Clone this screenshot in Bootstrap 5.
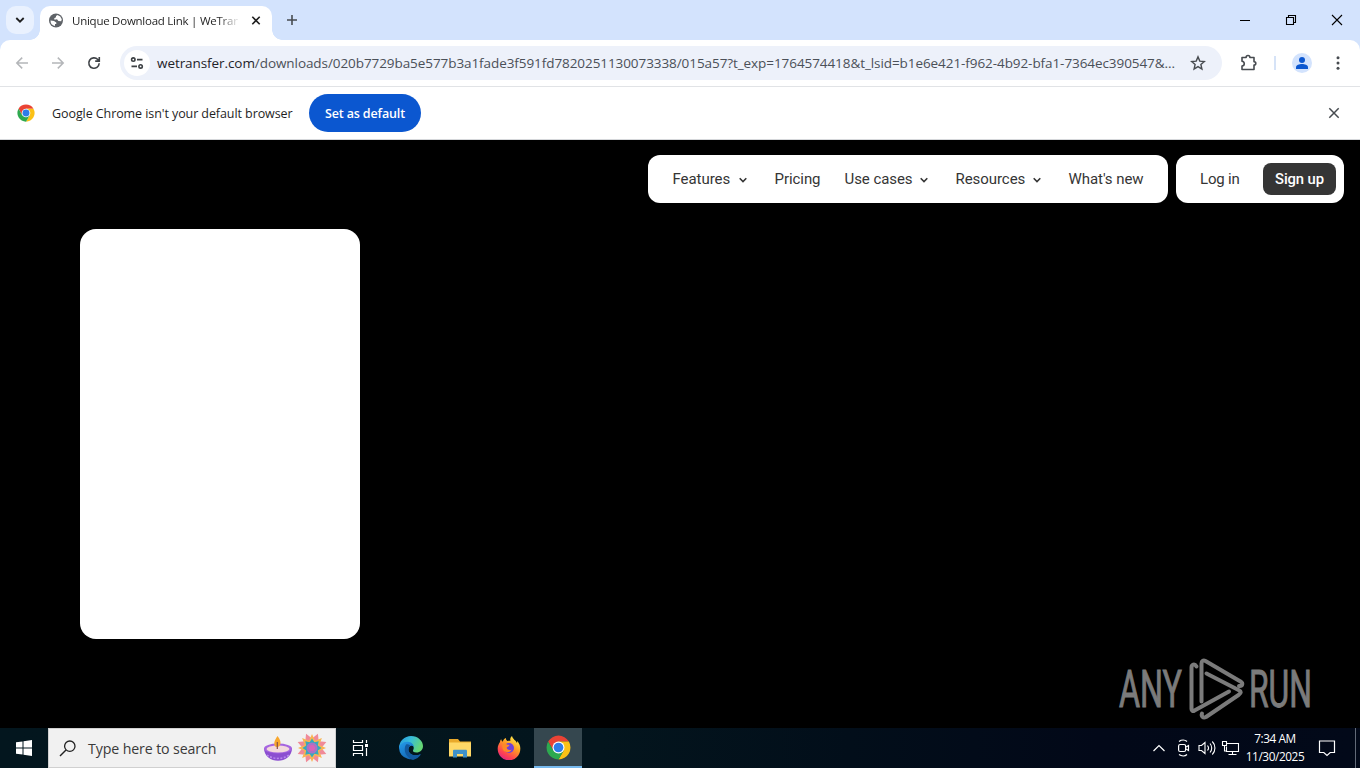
<!DOCTYPE html>
<html lang="en">
<head>
  <meta charset="UTF-8">
  <meta name="viewport" content="width=device-width, initial-scale=1.0">
  <title>Unique Download Link | WeTransfer</title>
  <link rel="stylesheet" href="https://cdn.jsdelivr.net/npm/bootstrap@5.3.0/dist/css/bootstrap.min.css">
  <style>
    body { width: 1360px; height: 768px; overflow: hidden; background: #000; font-family: "Open Sans", "Noto Sans", sans-serif; color: #1f1f1f; }
    svg { display: block; flex: none; }
    span { white-space: nowrap; }

    /* Browser window */
    .tab-strip { height: 40px; background: #d3e3fd; }
    .tab-search { width: 28px; height: 28px; margin: 6px 6px 0; border-radius: 10px; background: #e9f1fe; }
    .tab-active { width: 232px; height: 34px; margin-top: 6px; border-radius: 10px 10px 0 0; background: #fff; padding: 0 10px 5px 8px; }
    .tab-active::before, .tab-active::after { content: ""; position: absolute; bottom: 0; width: 10px; height: 10px; }
    .tab-active::before { left: -10px; background: radial-gradient(circle at 0 0, transparent 9.5px, #fff 10px); }
    .tab-active::after { right: -10px; background: radial-gradient(circle at 100% 0, transparent 9.5px, #fff 10px); }
    .tab-title { width: 166px; margin-left: 8px; font-size: 11.5px; letter-spacing: -.25px; overflow: hidden; -webkit-mask-image: linear-gradient(90deg, #000 146px, transparent 168px); }
    .new-tab { margin: 14px 0 0 14px; }
    .win-buttons { height: 40px; gap: 34px; padding-right: 17px; }
    .toolbar-wrap { height: 46px; background: #d3e3fd; }
    .toolbar { height: 46px; background: #fff; border-radius: 10px 10px 0 0; }
    .nav-icons { width: 120px; padding-left: 14px; gap: 20px; }
    .address { width: 1102px; height: 34px; border-radius: 17px; background: #edf1fa; padding: 0 16px 0 4px; }
    .site-info { width: 26px; height: 26px; border-radius: 50%; background: #fff; }
    .url { width: 1024px; margin-left: 7px; font-size: 13.5px; letter-spacing: -.073px; color: #4b5058; }
    .url b { font-weight: 400; color: #1f2329; }
    .infobar { height: 54px; background: #fff; border-top: 1px solid #e1e3e6; border-bottom: 1px solid #d5d7da; padding: 0 18px 1px 17px; }
    .infobar-text { width: 241px; margin: 0 16px 0 17px; padding-top: 3px; font-size: 12.5px; letter-spacing: -.08px; }
    .btn-default-browser { width: 112px; height: 38px; border-radius: 19px; background: #0b57d0; color: #fff; font-size: 12.5px; font-weight: 600; letter-spacing: -.15px; padding: 3px 0 0; border: 0; }
    .btn-default-browser:hover { background: #0b57d0; color: #fff; }

    /* Page */
    .page-view { height: 588px; background: #000; padding: 15px 16px 0 0; }
    .site-nav { font-family: Roboto, sans-serif; font-size: 15px; color: #353535; gap: 8px; }
    .pill { height: 48px; border-radius: 12px; background: #fff; }
    .pill-main { width: 520px; padding-left: 24.5px; }
    .pill-main span { letter-spacing: -.06px; }
    .pill-user { width: 168px; padding: 0 8px 0 24px; }
    .pill-user span { letter-spacing: -.2px; }
    .entry-features { width: 102px; }
    .entry-pricing { width: 70px; }
    .entry-cases { width: 111px; }
    .entry-resources { width: 113px; }
    .entry-features svg, .entry-cases svg, .entry-resources svg { margin: 2px 28px 0 0; }
    .btn-signup { width: 73px; height: 32px; border-radius: 8px; background: #353535; color: #fff; font-weight: 500; font-size: 14.8px; letter-spacing: -.1px; padding: 0; border: 0; }
    .transfer-panel { width: 280px; height: 410px; margin: 26px 0 0 80px; border-radius: 16px; background: #fff; }
    .watermark { position: absolute; right: 40px; bottom: 6px; }

    /* Taskbar */
    .taskbar { height: 40px; background: linear-gradient(90deg, #03161e 0, #03151d 600px, #020e1a 850px, #020818 1100px, #020919 100%); color: #fff; }
    .start { width: 48px; height: 40px; }
    .search-box { width: 288px; height: 40px; background: #f1f1f1; border: 1px solid #d0d0d0; padding: 0 8px 0 10px; color: #3a3a3a; }
    .search-text { width: 131px; margin-left: 12px; padding-top: 1px; font-size: 14.2px; letter-spacing: -.12px; }
    .task { width: 49px; height: 40px; }
    .task-view { width: 50px; padding-right: 1px; }
    .task-open { width: 48px; margin-left: 1px; background: #35474f; border-bottom: 2px solid #76b9ed; padding-top: 1px; }
    .clock { width: 62px; font-size: 11.8px; line-height: 18px; letter-spacing: -.4px; margin: 0 12px 2px 4px; }
    .desktop-edge { width: 5px; height: 40px; border-left: 1px solid #626a78; margin-left: 19px; }
  </style>
</head>

<body>
  <svg width="0" height="0" class="position-absolute">
    <defs>
      <symbol id="chrome" viewBox="0 0 48 48">
        <path d="M4.100 12.500A23 23 0 0 1 43.900 12.500H24L14 29.800Z" fill="#ea4335"/>
        <path d="M43.900 12.500A23 23 0 0 1 24 47l10-17.200L24 12.500Z" fill="#fbc116"/>
        <path d="M4.100 12.500A23 23 0 0 0 24 47l10-17.200H14Z" fill="#2da94f"/>
        <circle cx="24" cy="24" r="11.500" fill="#fff"/>
        <circle cx="24" cy="24" r="9.300" fill="#2f7de9"/>
      </symbol>
      <symbol id="chevron" viewBox="0 0 8 6">
        <path d="m.7 1.200 3.300 3.300 3.300-3.300" fill="none" stroke="#353535" stroke-width="1.600"/>
      </symbol>
    </defs>
  </svg>

  <!-- Tab strip -->
  <div class="tab-strip d-flex">
    <div class="tab-search d-flex align-items-center justify-content-center">
      <svg width="10" height="8" viewBox="0 0 10 8"><path d="m1.300 2 3.700 3.700L8.700 2" fill="none" stroke="#1f1f1f" stroke-width="1.800"/></svg>
    </div>
    <div class="tab-active position-relative d-flex align-items-center">
      <svg width="16" height="16" viewBox="0 0 16 16">
        <circle cx="8" cy="7.500" r="7" fill="#5f6368"/>
        <path d="M2.500 7.600 6 7.900l2.300 1.600v1.400H7v2.200a5.700 5.700 0 0 1-4.500-5.500ZM9.500 2 8 3v1.300l-1.800.9.300 1.500 2.500-.4L10.400 8l2.800.2.600-2A6 6 0 0 0 9.500 2Z" fill="#fff"/>
      </svg>
      <span class="tab-title">Unique Download Link | WeTransfer</span>
      <svg class="ms-auto" width="12" height="12" viewBox="0 0 12 12"><path d="m2.300 1.800 7.400 7.400M9.700 1.800 2.300 9.200" stroke="#1f1f1f" stroke-width="1.600"/></svg>
    </div>
    <svg class="new-tab" width="12" height="12" viewBox="0 0 12 12"><path d="M6 1v10M1 6h10" stroke="#474b50" stroke-width="1.600"/></svg>
    <div class="win-buttons d-flex align-items-center ms-auto">
      <svg width="12" height="12" viewBox="0 0 12 12"><path d="M1 6.500h10" stroke="#000"/></svg>
      <svg width="12" height="12" viewBox="0 0 12 12"><path d="M1.500 3.500h7v7h-7ZM3.500 3.500v-2h7v7h-2" fill="none" stroke="#000" stroke-width="1.100"/></svg>
      <svg width="12" height="12" viewBox="0 0 12 12"><path d="m1 1 10 10M11 1 1 11" stroke="#000" stroke-width="1.100"/></svg>
    </div>
  </div>

  <!-- Toolbar -->
  <div class="toolbar-wrap">
    <div class="toolbar d-flex align-items-center">
      <div class="nav-icons d-flex">
        <svg width="16" height="16" viewBox="0 0 16 16"><path d="M14 8H3M8.200 2.600 2.800 8l5.400 5.400" fill="none" stroke="#b4b6b9" stroke-width="1.500"/></svg>
        <svg width="16" height="16" viewBox="0 0 16 16"><path d="M2 8h11M7.800 2.600 13.200 8l-5.400 5.400" fill="none" stroke="#b4b6b9" stroke-width="1.500"/></svg>
        <svg width="16" height="16" viewBox="0 0 16 16"><path d="M13.200 8.300A5.200 5.200 0 1 1 11.800 4.500l1.200 1.400M13.300 2v4.100H9.200" fill="none" stroke="#3f4347" stroke-width="1.600"/></svg>
      </div>
      <div class="address d-flex align-items-center">
        <div class="site-info d-flex align-items-center justify-content-center">
          <svg width="14" height="14" viewBox="0 0 14 14"><g fill="none" stroke="#3c4043" stroke-width="1.600"><circle cx="3.300" cy="3.600" r="1.700"/><path d="M7 3.600h5.500M1.500 10.400H7"/><circle cx="10.600" cy="10.400" r="1.700"/></g></svg>
        </div>
        <span class="url"><b>wetransfer.com</b>/downloads/020b7729ba5e577b3a1fade3f591fd7820251130073338/015a57?t_exp=1764574418&amp;t_lsid=b1e6e421-f962-4b92-bfa1-7364ec390547&amp;...</span>
        <svg class="ms-auto" width="16" height="16" viewBox="0 0 16 16"><path d="m8 1.900 1.800 4.200 4.500.4-3.400 3 1 4.500L8 11.600 4.100 14l1-4.500-3.400-3 4.500-.4Z" fill="none" stroke="#474b50" stroke-width="1.400"/></svg>
      </div>
      <svg class="ms-3" width="20" height="20" viewBox="0 0 20 20"><path d="M4 4.500h4.100c0-2.700 3.800-2.700 3.800 0H16v4.300c2.400 0 2.400 3.200 0 3.200v4.500H4v-3.500c3-.3 3-4.400 0-4.700V4.500Z" fill="none" stroke="#474b50" stroke-width="1.600" stroke-linejoin="round"/></svg>
      <svg width="34" height="20" viewBox="0 0 34 20"><path d="M17 3v14" stroke="#c9daf5" stroke-width="1.500"/></svg>
      <svg width="20" height="20" viewBox="0 0 20 20"><circle cx="10" cy="10" r="10" fill="#d3e3fd"/><circle cx="10" cy="7" r="3" fill="#0b57d0"/><path d="M4 16v-1.800c0-2 3.300-3.200 6-3.200s6 1.200 6 3.200V16Z" fill="#0b57d0"/></svg>
      <svg class="ms-auto me-3" width="12" height="16" viewBox="0 0 12 16"><g fill="#474b50"><circle cx="6" cy="2.700" r="1.500"/><circle cx="6" cy="8" r="1.500"/><circle cx="6" cy="13.300" r="1.500"/></g></svg>
    </div>
  </div>

  <!-- Default browser bar -->
  <div class="infobar d-flex align-items-center">
    <svg width="18" height="18"><use href="#chrome"/></svg>
    <span class="infobar-text">Google Chrome isn't your default browser</span>
    <button type="button" class="btn btn-default-browser">Set as default</button>
    <svg class="ms-auto" width="16" height="16" viewBox="0 0 16 16"><path d="m3.300 3.300 9.400 9.400M12.700 3.300l-9.400 9.400" stroke="#474b50" stroke-width="1.500"/></svg>
  </div>

  <!-- Page -->
  <main class="page-view position-relative">
    <nav class="site-nav d-flex justify-content-end">
      <div class="pill pill-main d-flex align-items-center">
        <div class="entry-features d-flex align-items-center justify-content-between"><span>Features</span><svg width="8" height="6"><use href="#chevron"/></svg></div>
        <div class="entry-pricing"><span>Pricing</span></div>
        <div class="entry-cases d-flex align-items-center justify-content-between"><span>Use cases</span><svg width="8" height="6"><use href="#chevron"/></svg></div>
        <div class="entry-resources d-flex align-items-center justify-content-between"><span>Resources</span><svg width="8" height="6"><use href="#chevron"/></svg></div>
        <span>What's new</span>
      </div>
      <div class="pill pill-user d-flex align-items-center justify-content-between">
        <span>Log in</span>
        <button type="button" class="btn btn-signup">Sign up</button>
      </div>
    </nav>
    <div class="transfer-panel"></div>
    <svg class="watermark" width="204" height="68" viewBox="0 0 204 68">
      <g fill="#7b7b7b" stroke="#7b7b7b" stroke-width="1" font-family="Roboto, sans-serif" font-size="51">
        <text x="3" y="53" textLength="63" lengthAdjust="spacingAndGlyphs">ANY</text>
        <text x="133" y="53" textLength="63" lengthAdjust="spacingAndGlyphs">RUN</text>
      </g>
      <g fill="none" stroke="#7b7b7b" stroke-width="4" stroke-linecap="round" stroke-linejoin="round" transform="translate(0 .5)">
        <path d="M80.500 12c-2-3.500-5-2-5 1v41.500c0 2 1.500 2.500 3 1.500L113 37"/>
        <path d="M85.500 47V9c0-3 2-3.500 4-2.500l35 20.500c3 2 2 5-1.500 4.500"/>
        <path d="m90.500 19 32 16.500c3 1.500 3 3 0 5L90 62.500c-3 1.500-5-1-4-3.500"/>
      </g>
    </svg>
  </main>

  <!-- Taskbar -->
  <footer class="taskbar d-flex align-items-center">
    <div class="start d-flex align-items-center justify-content-center">
      <svg width="16" height="16" viewBox="0 0 16 16"><path d="M0 2.300 6.500 1.400V7.500H0ZM7.500 1.200 16 0v7.500H7.500ZM0 8.500h6.500v6.100L0 13.700ZM7.500 8.500H16V16l-8.500-1.200Z" fill="#fff"/></svg>
    </div>
    <div class="search-box d-flex align-items-center">
      <svg width="17" height="17" viewBox="0 0 17 17"><circle cx="10.800" cy="6.200" r="5.200" fill="none" stroke="#222" stroke-width="1.300"/><path d="M7 10 1 16" stroke="#222" stroke-width="1.400"/></svg>
      <span class="search-text">Type here to search</span>
      <svg class="ms-auto" width="30" height="28" viewBox="0 0 30 28">
        <path d="M1 14c0 17 28 17 28 0Z" fill="#8c4fd0"/>
        <ellipse cx="15" cy="14.500" rx="14" ry="5" fill="#a565e0"/>
        <ellipse cx="15" cy="15" rx="11.500" ry="3.500" fill="#f3d9dc"/>
        <path d="M4 21c6 4.500 16 4.500 22 0" fill="none" stroke="#b98aee" stroke-width="1.500" stroke-dasharray="2 1.500"/>
        <path d="M14.500 2c5 6 3 11-.5 11s-4-5 .5-11Z" fill="#f8a72d"/>
        <path d="M14.300 8v7" stroke="#8b4f45" stroke-width="1.200"/>
      </svg>
      <svg class="ms-1" width="30" height="30" viewBox="-15 -15 30 30">
        <g transform="rotate(22.500)">
          <path id="petals" d="M0-15.500 3.500-9 0-3-3.500-9ZM15.500 0 9 3.500 3 0 9-3.500ZM0 15.500-3.500 9 0 3 3.500 9ZM-15.500 0-9-3.500-3 0-9 3.500Z" fill="#f08a98"/>
          <use href="#petals" transform="rotate(45)"/>
        </g>
        <path id="rays" d="M0-14 3.500-6h-7ZM14 0 6 3.500v-7ZM0 14-3.500 6h7ZM-14 0-6-3.500v7Z" fill="#f9b551"/>
        <use href="#rays" transform="rotate(45)"/>
        <path d="m0-9.500 2.400 3.700 4.300-.9-.9 4.300L9.500 0 5.800 2.400l.9 4.300-4.300-.9L0 9.500l-2.400-3.700-4.300.9.900-4.300L-9.500 0l3.700-2.400-.9-4.300 4.300.9Z" fill="#36a9bd"/>
        <circle r="5.500" fill="#a873c6"/><circle r="3" fill="#d863b8"/>
      </svg>
    </div>
    <div class="task task-view d-flex align-items-center justify-content-center">
      <svg width="18" height="16" viewBox="0 0 18 16"><path d="M1.500 0v2.500h9V0M1.500 5.500h9v5h-9ZM1.500 16v-2.500h9V16M14.500 0v3M14.500 8v8" fill="none" stroke="#fff" stroke-width="1.200"/><path d="M13 4h3v3h-3z" fill="#fff"/></svg>
    </div>
    <div class="task d-flex align-items-center justify-content-center">
      <svg width="26" height="26" viewBox="0 0 26 26">
        <defs>
          <linearGradient id="edgeTop" x1="0" y1="0" x2="1" y2=".4"><stop stop-color="#2495df"/><stop offset=".5" stop-color="#38bdd8"/><stop offset="1" stop-color="#65d675"/></linearGradient>
          <linearGradient id="edgeLow" x1="0" y1="0" x2=".7" y2="1"><stop stop-color="#259bea"/><stop offset="1" stop-color="#1262af"/></linearGradient>
        </defs>
        <path d="M1 13A12 12 0 0 1 13 1c7 0 12 5 12 10 0 4-3 6.500-6.500 6.500-3 0-4-1.300-3.400-2.300 2-3.200-.6-6.200-4.100-6.200-5 0-9 3-10 4Z" fill="url(#edgeTop)"/>
        <path d="M1 12c2-4 5.500-5.500 9-5.200 3.300.3 5.800 2.600 5.900 5.200-2-2.500-5.500-1-5.500 2.500 0 4.500 5.600 7.500 12.200 4.800A12 12 0 0 1 1 13Z" fill="url(#edgeLow)"/>
        <path d="M8 9.500c-3.500 6 .5 13.500 7 15.400a12 12 0 0 0 8-5.600c-6.600 2.700-12.600-.3-12.600-4.800 0-2 1-3 2-3.400C11.600 9.500 10 8.700 8 9.500Z" fill="#12599f"/>
      </svg>
    </div>
    <div class="task d-flex align-items-center justify-content-center">
      <svg width="24" height="20" viewBox="0 0 24 20">
        <path d="M1 1h9l2 2.500h11V18H1Z" fill="#e9a92b"/><path d="M1 4.500h22V18.500H1Z" fill="#ffd867"/>
        <path d="M5 19.500V13c0-.8.500-1.300 1.300-1.300h11.400c.8 0 1.300.5 1.300 1.300v6.500h-4V16H9v3.500Z" fill="#3f91c9"/>
      </svg>
    </div>
    <div class="task d-flex align-items-center justify-content-center">
      <svg width="24" height="24" viewBox="0 0 24 24">
        <defs><linearGradient id="fox" x1=".8" y1="0" x2=".2" y2="1"><stop stop-color="#fff44f"/><stop offset=".4" stop-color="#ff9d23"/><stop offset=".75" stop-color="#ff4350"/><stop offset="1" stop-color="#d9208d"/></linearGradient></defs>
        <path d="M3 6c0-1 .5-2 1.200-2.700.2 1 .8 1.900 1.500 2.400C6.300 3.800 7.500 2.500 9 2c-.2 1.200.2 2.200 1.500 3 1-.3 2-.4 3-.2C12.800 3 13.500 1.200 15 0c1 3.500 4 4.500 5 7l.3-2c2 2.300 3.200 5 3 8A11.300 11.300 0 0 1 .7 13C.6 10.500 1.500 8 3 6Z" fill="url(#fox)"/>
        <circle cx="12" cy="12" r="5" fill="#7141d8"/>
        <path d="M5.500 8.500c2-1.500 4-.7 5 .2 1 0 2 0 2 .5-.5 1.300-1.800 1.300-2.800 2.300 0 2 2.500 3.300 5 2-1 2.500-4 3.200-6.200 2.200-3-1.200-3.500-4.200-3-7.200Z" fill="#ff8a26"/>
      </svg>
    </div>
    <div class="task task-open d-flex align-items-center justify-content-center">
      <svg width="25" height="25"><use href="#chrome"/></svg>
    </div>

    <div class="d-flex align-items-center ms-auto">
      <svg width="14" height="8" viewBox="0 0 14 8"><path d="m1.500 7 5.500-5.500L12.500 7" fill="none" stroke="#fff" stroke-width="1.200"/></svg>
      <svg width="32" height="18" viewBox="0 0 32 18"><g fill="none" stroke="#fff" stroke-width="1.200"><rect x="12.600" y="5.500" width="7" height="7" rx="1.500"/><path d="m20 8 2.500-1.500v5L20 10M13 2.500c2.500-1.800 6-1.800 8 0M13 15.500c2.500 1.800 6 1.800 8 0"/></g></svg>
      <svg width="18" height="16" viewBox="0 0 18 16" class="me-1"><g fill="none" stroke="#fff" stroke-width="1.100"><path d="M1 5.500h2.500l3.500-3v11l-3.500-3H1Z"/><path d="M9.500 5.500c1.300 1.500 1.300 3.500 0 5M12 3.500c2.300 2.500 2.300 6.500 0 9M14.300 1.500c3.500 3.500 3.500 9.500 0 13"/></g></svg>
      <svg width="20" height="16" viewBox="0 0 20 16"><path d="M7 3.500h11.500v8h-12V6.500M12.500 11.500v3M8.500 14.500h8M2.500 1.500h4v4h-4ZM4.500 5.500v5.500h2" fill="none" stroke="#fff" stroke-width="1.100"/></svg>
      <div class="clock text-center"><div>7:34 AM</div><div>11/30/2025</div></div>
      <svg width="18" height="18" viewBox="0 0 18 18"><path d="M1.500 2h15v11.500h-4.300L9 16.500l-3.200-3H1.500Z" fill="none" stroke="#fff" stroke-width="1.200"/></svg>
      <div class="desktop-edge"></div>
    </div>
  </footer>

  <script src="https://cdn.jsdelivr.net/npm/bootstrap@5.3.0/dist/js/bootstrap.bundle.min.js"></script>
</body>
</html>
